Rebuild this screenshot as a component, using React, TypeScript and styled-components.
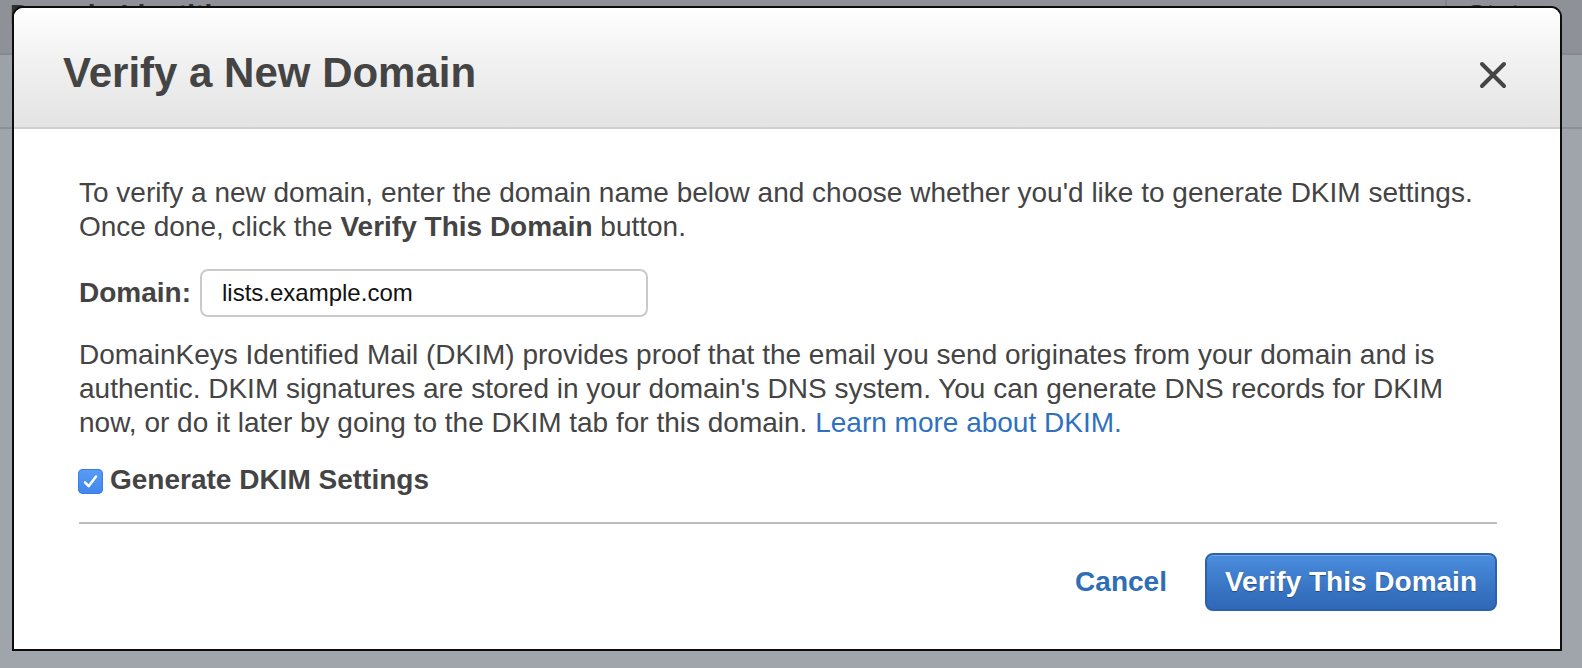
import React from "react";
import styled, { createGlobalStyle } from "styled-components";

const GlobalStyle = createGlobalStyle`
  html, body {
    margin: 0;
    padding: 0;
    width: 1582px;
    height: 668px;
    overflow: hidden;
    background: #a0a4ab;
    font-family: "Liberation Sans", Helvetica, Arial, sans-serif;
  }
  * { box-sizing: border-box; }
`;

const Page = styled.div`
  position: relative;
  width: 1582px;
  height: 668px;
  overflow: hidden;
  background: #a0a4ab;
`;

const TableHead = styled.div`
  display: flex;
  height: 55px;
  background: #8e9298;
  border-bottom: 2px solid #868a90;
`;

const HeadCell = styled.div<{ $width?: number; $divider?: boolean }>`
  ${(p) => (p.$width ? `width: ${p.$width}px;` : "flex: 1;")}
  padding-left: ${(p) => (p.$divider ? 20 : 10)}px;
  padding-top: 5px;
  border-left: ${(p) => (p.$divider ? "2px solid #80848a" : "none")};
  font-size: 28px;
  font-weight: 700;
  line-height: 20px;
  color: #2c2e31;
  white-space: nowrap;
  overflow: hidden;
`;

const TableRow = styled.div`
  height: 74px;
  background: #9da1a8;
  border-bottom: 2px solid #8d9197;
`;

const Modal = styled.div`
  position: absolute;
  top: 6px;
  left: 12px;
  width: 1550px;
  height: 645px;
  display: flex;
  flex-direction: column;
  background: #ffffff;
  border: 2px solid #0d0d0d;
  border-radius: 11px 11px 0 0;
  overflow: hidden;
`;

const Header = styled.div`
  height: 121px;
  flex: none;
  display: flex;
  align-items: center;
  justify-content: space-between;
  padding: 10px 52px 0 49px;
  background: linear-gradient(to bottom, #ffffff 0%, #f1f1f1 45%, #e3e3e3 100%);
  border-bottom: 2px solid #cfcfcf;
`;

const Title = styled.h2`
  margin: 0;
  font-size: 42px;
  line-height: 48px;
  font-weight: 700;
  color: #444444;
`;

const CloseButton = styled.button`
  display: flex;
  align-items: center;
  justify-content: center;
  width: 30px;
  height: 30px;
  margin-top: 5px;
  padding: 0;
  border: none;
  background: transparent;
  cursor: pointer;
`;

const Body = styled.div`
  display: flex;
  flex-direction: column;
  padding: 47px 63px 40px 65px;
`;

const Paragraph = styled.p<{ $gap?: number }>`
  margin: ${(p) => p.$gap ?? 0}px 0 0 0;
  font-size: 28px;
  line-height: 34px;
  color: #444444;
`;

const Strong = styled.strong`
  font-weight: 700;
`;

const Link = styled.a`
  color: #2f71c0;
  text-decoration: none;
`;

const DomainRow = styled.div`
  display: flex;
  align-items: center;
  gap: 9px;
  margin-top: 25px;
`;

const Label = styled.label`
  font-size: 28px;
  line-height: 34px;
  font-weight: 700;
  color: #444444;
`;

const TextInput = styled.input`
  width: 448px;
  height: 48px;
  padding: 0 20px;
  border: 2px solid #cacaca;
  border-radius: 8px;
  font-family: "Liberation Sans", Helvetica, Arial, sans-serif;
  font-size: 24px;
  color: #111111;
  background: #ffffff;
  outline: none;
`;

const CheckRow = styled.label`
  display: flex;
  align-items: center;
  gap: 7px;
  margin-top: 23px;
  font-size: 28px;
  line-height: 34px;
  font-weight: 700;
  color: #444444;
`;

const CheckBox = styled.span`
  display: inline-flex;
  align-items: center;
  justify-content: center;
  width: 25px;
  height: 25px;
  margin-left: -1px;
  margin-top: 3px;
  border-radius: 5px;
  background: linear-gradient(to bottom, #5a9cf5, #3f86ee);
  box-shadow: inset 0 0 0 1px #3a7fe0;
`;

const Rule = styled.hr`
  margin: 25px 0 0 0;
  height: 2px;
  border: none;
  background: #bdbdbd;
`;

const Footer = styled.div`
  display: flex;
  justify-content: flex-end;
  align-items: center;
  gap: 38px;
  margin-top: 29px;
`;

const CancelButton = styled.button`
  padding: 0;
  border: none;
  background: transparent;
  font-family: "Liberation Sans", Helvetica, Arial, sans-serif;
  font-size: 28px;
  font-weight: 700;
  color: #2f6db4;
  cursor: pointer;
`;

const PrimaryButton = styled.button`
  height: 58px;
  padding: 0 18px;
  border: 2px solid #2c62ad;
  border-radius: 8px;
  background: linear-gradient(to bottom, #4b8ddd 0%, #3c79c9 50%, #2f68b7 100%);
  box-shadow: inset 0 1px 0 rgba(255, 255, 255, 0.25);
  font-family: "Liberation Sans", Helvetica, Arial, sans-serif;
  font-size: 28px;
  font-weight: 700;
  color: #ffffff;
  text-shadow: 0 1px 1px rgba(0, 0, 0, 0.35);
  cursor: pointer;
`;

export default function App() {
  return (
    <>
      <GlobalStyle />
      <Page>
        <TableHead>
          <HeadCell>Domain Identities</HeadCell>
          <HeadCell $width={137} $divider>
            Status
          </HeadCell>
        </TableHead>
        <TableRow />
        <Modal role="dialog" aria-label="Verify a New Domain">
          <Header>
            <Title>Verify a New Domain</Title>
            <CloseButton aria-label="Close">
              <svg width="30" height="30" viewBox="0 0 30 30">
                <path
                  d="M4 4 L26 26 M26 4 L4 26"
                  stroke="#444444"
                  strokeWidth="4"
                  strokeLinecap="round"
                  fill="none"
                />
              </svg>
            </CloseButton>
          </Header>
          <Body>
            <Paragraph>
              To verify a new domain, enter the domain name below and choose whether you'd like to generate DKIM settings.
              <br />
              Once done, click the <Strong>Verify This Domain</Strong> button.
            </Paragraph>
            <DomainRow>
              <Label htmlFor="domain">Domain:</Label>
              <TextInput id="domain" defaultValue="lists.example.com" />
            </DomainRow>
            <Paragraph $gap={21}>
              DomainKeys Identified Mail (DKIM) provides proof that the email you send originates from your domain and is
              <br />
              authentic. DKIM signatures are stored in your domain's DNS system. You can generate DNS records for DKIM
              <br />
              now, or do it later by going to the DKIM tab for this domain. <Link href="#">Learn more about DKIM.</Link>
            </Paragraph>
            <CheckRow>
              <CheckBox>
                <svg width="21" height="21" viewBox="0 0 16 16">
                  <path
                    d="M3.8 8.6 L6.6 11.6 L12.2 4.2"
                    stroke="#ffffff"
                    strokeWidth="1.9"
                    strokeLinecap="round"
                    strokeLinejoin="round"
                    fill="none"
                  />
                </svg>
              </CheckBox>
              Generate DKIM Settings
            </CheckRow>
            <Rule />
            <Footer>
              <CancelButton>Cancel</CancelButton>
              <PrimaryButton>Verify This Domain</PrimaryButton>
            </Footer>
          </Body>
        </Modal>
      </Page>
    </>
  );
}
